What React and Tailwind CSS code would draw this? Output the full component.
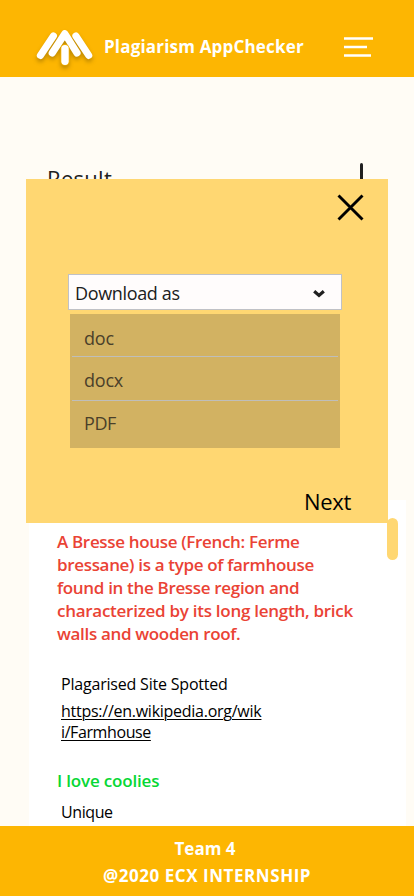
function Logo() {
  return (
    <svg width="70" height="52" viewBox="30.4 22 70 52" fill="none" className="shrink-0 drop-shadow-[0_3px_2px_rgba(0,0,0,0.25)]">
      <g stroke="#fff" strokeWidth="7.1" strokeLinecap="round" strokeLinejoin="round">
        <path d="M40.8 55.4 53.8 36" />
        <path d="M76.3 36 89.1 55.4" />
        <path d="M52.6 53 65.2 33.7 77.4 53" />
      </g>
      <path d="M65.4 48.6V61.2" stroke="#FDB602" strokeWidth="8.8" strokeLinecap="round" />
      <path d="M65.4 48.8V61.2" stroke="#fff" strokeWidth="7.4" strokeLinecap="round" />
    </svg>
  );
}

function Header() {
  return (
    <header className="flex h-[77px] shrink-0 items-center bg-[#FDB602] pl-[30px] pr-[41px] pt-[19px]">
      <Logo />
      <h1 className="mb-[3px] ml-[4px] whitespace-nowrap text-[17px] font-bold leading-6 tracking-[0.18px] text-white">
        Plagiarism AppChecker
      </h1>
      <button aria-label="Menu" className="mb-[3px] ml-auto">
        <svg width="30" height="22" viewBox="0 0 30 22" stroke="#fff" strokeWidth="2.3">
          <path d="M1 2.5H30M1 11H24M1 19.5H28" />
        </svg>
      </button>
    </header>
  );
}

function DownloadDialog() {
  return (
    <section className="absolute left-[26px] top-[179px] flex h-[344px] w-[362px] flex-col bg-[#FFD772]">
      <button aria-label="Close" className="ml-auto mr-[23px] mt-[14px]">
        <svg width="29" height="29" viewBox="0 0 29 29" stroke="#000" strokeWidth="2.9" className="block">
          <path d="M2.5 2.5 26.5 26.5M26.5 2.5 2.5 26.5" />
        </svg>
      </button>
      <div className="ml-[42px] mt-[52px] flex h-[36px] w-[274px] items-center border border-[#C0C1C6] bg-[#FFFCFC] pl-[6px] pr-[16px] pt-[2px]">
        <span className="text-[18px] leading-6 tracking-[-0.35px] text-[#202020]">Download as</span>
        <svg width="12" height="8" viewBox="0 0 12 8" fill="none" stroke="#202020" strokeWidth="3.2" className="ml-auto mt-[2px]">
          <path d="M1.2 1.2 6 5.4 10.8 1.2" />
        </svg>
      </div>
      <ul className="ml-[44px] mt-[4px] h-[134px] w-[270px] bg-[#D2B262] pl-[2px] pr-[2px] text-[18px] leading-6 text-[#4A402A]">
        <li className="flex h-[43px] items-center border-b border-[#BFBEBB] pl-[12px] pt-[6px] tracking-[-0.2px]">doc</li>
        <li className="flex h-[44px] items-center border-b border-[#BFBEBB] pl-[12px] pt-[2px] tracking-[-0.2px]">docx</li>
        <li className="flex h-[44px] items-center pl-[12px] tracking-[-0.4px]">PDF</li>
      </ul>
      <button className="ml-auto mr-[37px] mt-[37px] text-[22px] leading-8 tracking-[-0.3px] text-black">Next</button>
    </section>
  );
}

function ResultsPanel() {
  return (
    <section className="ml-[29px] mt-auto h-[326px] w-[377px] bg-white pl-[28px] pt-[30px]">
      <p className="whitespace-nowrap text-[17px] font-semibold leading-[23px] tracking-[-0.33px] text-[#EA4335]">
        <span className="block">A Bresse house (French: Ferme</span>
        <span className="block">bressane) is a type of farmhouse</span>
        <span className="block">found in the Bresse region and</span>
        <span className="block tracking-[-0.27px]">characterized by its long length, brick</span>
        <span className="block">walls and wooden roof.</span>
      </p>
      <p className="ml-[4px] mt-[28px] text-[16px] leading-[22px] tracking-[-0.2px] text-black">Plagarised Site Spotted</p>
      <a className="ml-[4px] mt-[6px] block whitespace-nowrap text-[16px] leading-[21px] tracking-[-0.26px] text-black underline decoration-1 underline-offset-2">
        https://en.wikipedia.org/wik
        <br />
        <span className="tracking-[-0.4px]">i/Farmhouse</span>
      </a>
      <p className="mt-[26px] text-[17px] font-semibold leading-[23px] tracking-[-0.18px] text-[#06D734]">I love coolies</p>
      <p className="ml-[4px] mt-[9px] text-[16px] leading-[22px] tracking-[-0.4px] text-black">Unique</p>
    </section>
  );
}

export default function App() {
  return (
    <div className="relative flex h-[896px] w-[414px] flex-col overflow-hidden bg-[#FFFCF5] font-['Open_Sans','Noto_Sans',sans-serif]">
      <Header />
      <main className="flex min-h-0 flex-1 flex-col">
        <div className="ml-[47px] mr-[51px] mt-[85px] flex items-start justify-between">
          <h2 className="text-[22px] leading-8 tracking-[0.3px] text-[#202020]">Result</h2>
          <div className="mt-[1px] h-[24px] w-[3px] rounded-t-sm bg-[#202020]" />
        </div>
        <ResultsPanel />
      </main>
      <footer className="flex h-[70px] shrink-0 flex-col items-center bg-[#FDB602] pt-[9px] text-[17px] font-bold leading-[27px] text-white">
        <p className="mr-[4px]">Team 4</p>
        <p className="whitespace-nowrap tracking-[0.55px]">@2020 ECX INTERNSHIP</p>
      </footer>
      <div className="absolute left-[387px] top-[518px] h-[42px] w-[11px] rounded-full bg-[#FFD772]" />
      <DownloadDialog />
    </div>
  );
}
